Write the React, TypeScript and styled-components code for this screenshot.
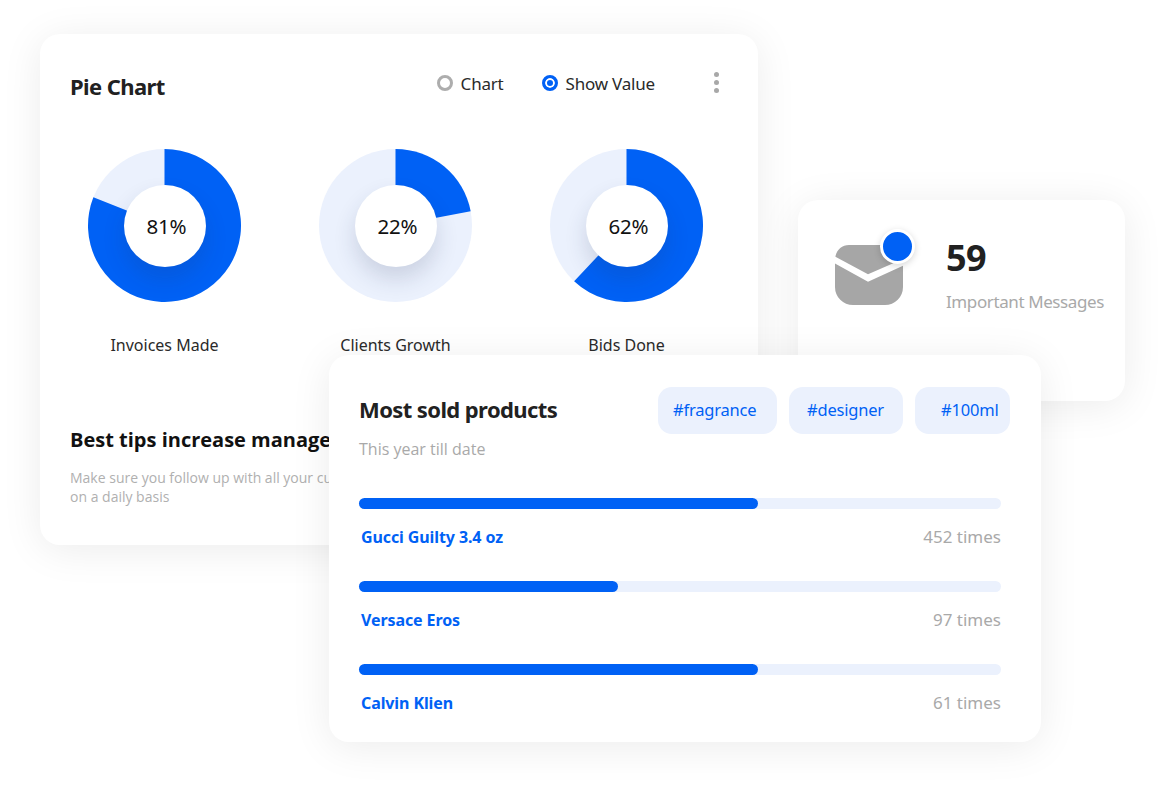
import React from 'react';
import styled, { createGlobalStyle } from 'styled-components';

const BLUE = '#0061f5';
const PALE = '#ebf1fd';

const GlobalStyle = createGlobalStyle`
  html, body {
    margin: 0;
    background: #fff;
    font-family: 'Noto Sans', 'Open Sans', sans-serif;
    color: #212121;
  }
`;

const Stage = styled.div`
  width: 1165px;
  height: 788px;
  overflow: hidden;
  display: grid;
  grid-template-columns: 40px 289px 429px 40px 243px 84px 40px;
  grid-template-rows: 34px 166px 155px 46px 144px 197px 46px;
`;

const Card = styled.section`
  background: #fff;
  border-radius: 20px;
  box-shadow: 0 5px 40px rgba(0, 0, 0, 0.08);
  box-sizing: border-box;
`;

const PieCard = styled(Card)`
  grid-column: 2 / 4;
  grid-row: 2 / 6;
  padding: 37px 30px 0;
`;

const MessageCard = styled(Card)`
  grid-column: 5 / 7;
  grid-row: 3 / 5;
  display: flex;
  gap: 43px;
  padding: 37px 20px 0 37px;
`;

const ProductsCard = styled(Card)`
  grid-column: 3 / 6;
  grid-row: 4 / 7;
  padding: 32px 40px 0 30px;
  z-index: 2;
`;

const CardHeader = styled.header`
  display: flex;
  align-items: center;
`;

const CardTitle = styled.h2`
  margin: 0 auto 0 0;
  font-size: 22px;
  line-height: 34px;
  font-weight: 700;
  letter-spacing: -0.6px;
`;

const PieTitle = styled(CardTitle)`
  margin-top: -2px;
`;

const ProductsTitle = styled(CardTitle)`
  margin-top: -4px;
`;

const RadioItem = styled.label`
  display: flex;
  align-items: center;
  gap: 8px;
  font-size: 17px;
  letter-spacing: -0.2px;
  margin-right: 38px;
  margin-top: -8px;
  color: #2a2a2a;
`;

const LastRadio = styled(RadioItem)`
  margin-right: 0;
`;

const RadioDot = styled.span<{ $on?: boolean }>`
  width: 16px;
  height: 16px;
  box-sizing: border-box;
  border-radius: 50%;
  border: ${p => (p.$on ? `3px solid ${BLUE}` : '3px solid #adadad')};
  background: ${p => (p.$on ? BLUE : '#fff')};
  box-shadow: ${p => (p.$on ? 'inset 0 0 0 2px #fff' : 'none')};
`;

const MoreDots = styled.div`
  display: flex;
  flex-direction: column;
  gap: 3px;
  margin: -10px 9px 0 59px;
  span {
    width: 5px;
    height: 5px;
    border-radius: 50%;
    background: #a8a8a8;
  }
`;

const PieRow = styled.div`
  display: flex;
  margin: 46px 0 0 18px;
`;

const PieBlock = styled.figure`
  margin: 0;
  flex: none;
  width: 231px;
  display: flex;
  flex-direction: column;
  align-items: flex-start;
`;

const RingWrap = styled.div`
  position: relative;
  width: 153px;
  height: 153px;
`;

const RingHole = styled.div`
  position: absolute;
  left: 35.5px;
  top: 35.5px;
  width: 82px;
  height: 82px;
  border-radius: 50%;
  background: #fff;
  display: flex;
  align-items: center;
  justify-content: center;
  font-size: 20.5px;
  color: #111;
  padding: 1px 0 0 4px;
  box-sizing: border-box;
  letter-spacing: -0.2px;
  box-shadow: 0 12px 22px rgba(40, 50, 90, 0.16);
`;

const PieLabel = styled.figcaption`
  width: 153px;
  text-align: center;
  margin-top: 32px;
  font-size: 16px;
  line-height: 22px;
  white-space: nowrap;
  color: #2a2a2a;
`;

const TipTitle = styled.h3`
  margin: 70px 0 0;
  font-family: 'Open Sans', sans-serif;
  font-size: 20px;
  line-height: 28px;
  font-weight: 700;
  color: #111;
  white-space: nowrap;
`;

const TipText = styled.p`
  margin: 14px 0 0;
  width: 330px;
  font-family: 'Open Sans', sans-serif;
  font-size: 14px;
  line-height: 19px;
  color: #b0b0b0;
`;

const MailIcon = styled.div`
  position: relative;
  width: 68px;
  height: 60px;
  margin-top: 8px;
  flex: none;
`;

const MailBadge = styled.span`
  position: absolute;
  right: -12px;
  top: -16px;
  width: 29px;
  height: 29px;
  border-radius: 50%;
  background: ${BLUE};
  border: 3px solid #fff;
  box-shadow: 0 2px 7px rgba(0, 0, 0, 0.16);
`;

const MessageCount = styled.div`
  font-size: 36px;
  line-height: 42px;
  font-weight: 700;
  color: #212121;
  letter-spacing: -0.5px;
`;

const MessageLabel = styled.div`
  margin-top: 11px;
  font-size: 17px;
  line-height: 24px;
  letter-spacing: -0.4px;
  white-space: nowrap;
  color: #a9a9a9;
`;

const TagRow = styled.div`
  display: flex;
  gap: 12px;
  margin-right: -9px;
`;

const Tag = styled.span<{ $width: number; $inset: number }>`
  width: ${p => p.$width}px;
  height: 47px;
  box-sizing: border-box;
  border-radius: 14px;
  background: ${PALE};
  color: ${BLUE};
  display: flex;
  align-items: center;
  padding: 0 0 2px ${p => p.$inset}px;
  font-size: 16.5px;
  letter-spacing: -0.2px;
`;

const ProductsSub = styled.div`
  margin-top: 4px;
  font-family: 'Open Sans', sans-serif;
  font-size: 16px;
  line-height: 22px;
  color: #a9a9a9;
`;

const ProductList = styled.div`
  margin-top: 38px;
  display: flex;
  flex-direction: column;
  gap: 30px;
`;

const Track = styled.div`
  height: 11px;
  border-radius: 6px;
  background: ${PALE};
`;

const Fill = styled.div`
  height: 100%;
  border-radius: 6px;
  background: ${BLUE};
`;

const ProductMeta = styled.div`
  display: flex;
  justify-content: space-between;
  margin-top: 15px;
  height: 27px;
  line-height: 27px;
`;

const ProductName = styled.span`
  padding-left: 2px;
  font-size: 16px;
  font-weight: 700;
  letter-spacing: -0.1px;
  color: ${BLUE};
`;

const ProductCount = styled.span`
  font-size: 17px;
  line-height: 25px;
  color: #a9a9a9;
`;

const arcPath = (pct: number) => {
  const a = (pct / 100) * 2 * Math.PI;
  const x = 77 + 77 * Math.sin(a);
  const y = 77 - 77 * Math.cos(a);
  return `M77 77 L77 0 A77 77 0 ${pct > 50 ? 1 : 0} 1 ${x.toFixed(2)} ${y.toFixed(2)} Z`;
};

const Donut: React.FC<{ value: number; label: string }> = ({ value, label }) => (
  <PieBlock>
    <RingWrap>
      <svg width="153" height="153" viewBox="0 0 154 154">
        <circle cx="77" cy="77" r="77" fill={PALE} />
        <path d={arcPath(value)} fill={BLUE} />
      </svg>
      <RingHole>{value}%</RingHole>
    </RingWrap>
    <PieLabel>{label}</PieLabel>
  </PieBlock>
);

const products = [
  { name: 'Gucci Guilty 3.4 oz', times: 452, pct: 62.2 },
  { name: 'Versace Eros', times: 97, pct: 40.4 },
  { name: 'Calvin Klien', times: 61, pct: 62.2 },
];

const App: React.FC = () => (
  <>
    <GlobalStyle />
    <Stage>
      <PieCard>
        <CardHeader>
          <PieTitle>Pie Chart</PieTitle>
          <RadioItem>
            <RadioDot />
            Chart
          </RadioItem>
          <LastRadio>
            <RadioDot $on />
            Show Value
          </LastRadio>
          <MoreDots>
            <span />
            <span />
            <span />
          </MoreDots>
        </CardHeader>
        <PieRow>
          <Donut value={81} label="Invoices Made" />
          <Donut value={22} label="Clients Growth" />
          <Donut value={62} label="Bids Done" />
        </PieRow>
        <TipTitle>Best tips increase management</TipTitle>
        <TipText>Make sure you follow up with all your customers on a daily basis</TipText>
      </PieCard>

      <MessageCard>
        <MailIcon>
          <svg width="68" height="60" viewBox="0 0 68 60">
            <path
              d="M0.4 11.7 C1.6 4.8 7 0 14 0 H54 A14 14 0 0 1 68 14 L33 29.2 Z M0 18.5 L33 36.7 L68 20.7 V42 A18 18 0 0 1 50 60 H18 A18 18 0 0 1 0 42 Z"
              fill="#a6a6a6"
            />
          </svg>
          <MailBadge />
        </MailIcon>
        <div>
          <MessageCount>59</MessageCount>
          <MessageLabel>Important Messages</MessageLabel>
        </div>
      </MessageCard>

      <ProductsCard>
        <CardHeader>
          <ProductsTitle>Most sold products</ProductsTitle>
          <TagRow>
            <Tag $width={119} $inset={15}>#fragrance</Tag>
            <Tag $width={114} $inset={18}>#designer</Tag>
            <Tag $width={95} $inset={26}>#100ml</Tag>
          </TagRow>
        </CardHeader>
        <ProductsSub>This year till date</ProductsSub>
        <ProductList>
          {products.map(p => (
            <div key={p.name}>
              <Track>
                <Fill style={{ width: `${p.pct}%` }} />
              </Track>
              <ProductMeta>
                <ProductName>{p.name}</ProductName>
                <ProductCount>{p.times} times</ProductCount>
              </ProductMeta>
            </div>
          ))}
        </ProductList>
      </ProductsCard>
    </Stage>
  </>
);

export default App;
